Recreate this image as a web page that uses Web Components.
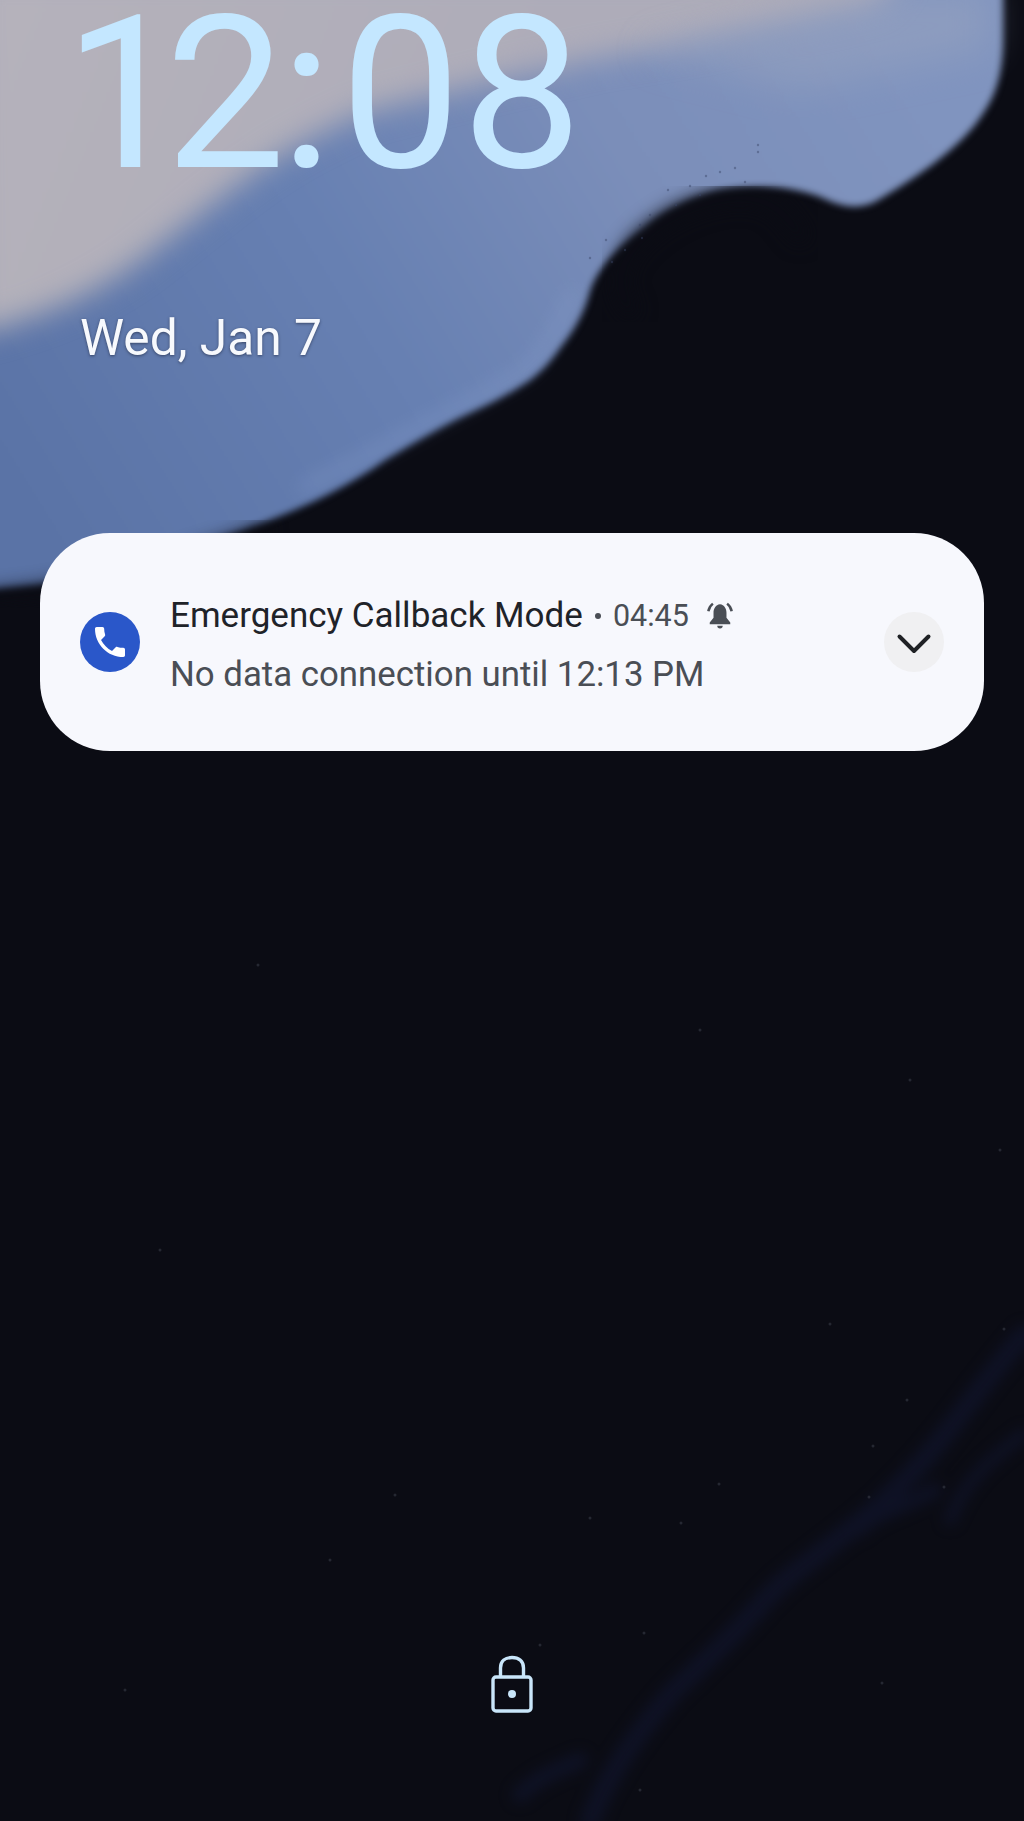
<!DOCTYPE html>
<html lang="en">
<head>
<meta charset="utf-8">
<title>Lock screen</title>
<style>
  html, body { margin: 0; background: #0b0c14; }
</style>
</head>
<body>
<lock-screen>
  <lock-clock time="12:08" date="Wed, Jan 7"></lock-clock>
  <notification-card>
    <span slot="title">Emergency Callback Mode</span>
    <span slot="time">04:45</span>
    <span slot="text">No data connection until 12:13 PM</span>
  </notification-card>
  <lock-indicator></lock-indicator>
</lock-screen>

<script>
// Wallpaper is drawn once inside the screen and everything else flows over it
class LockScreen extends HTMLElement {
  constructor() {
    super();
    this.attachShadow({ mode: "open" });

    // Faint specks on the dark part of the wallpaper
    const specks = [
      [830, 1324], [1004, 1329], [873, 1446], [719, 1484], [681, 1523], [869, 1497],
      [944, 1487], [907, 1400], [644, 1633], [882, 1683], [258, 965], [160, 1250],
      [910, 1080], [540, 1645], [590, 1518], [1000, 1150], [700, 1030],
      [125, 1690], [395, 1495], [330, 1560], [640, 1790]
    ].map(([x, y]) => `<circle cx="${x}" cy="${y}" r="1.5" fill="#3c3f4a" opacity=".55"/>`).join("");

    // Grain along the blurred edge of the blue shape
    const grain = [
      [606, 240], [642, 238], [668, 190], [690, 186], [706, 176], [720, 172], [735, 168],
      [758, 145], [612, 262], [650, 215], [676, 205], [700, 195], [590, 258], [745, 182],
      [758, 152], [640, 225], [625, 250]
    ].map(([x, y]) => `<circle cx="${x}" cy="${y}" r="1.2" fill="#3a4468" opacity=".45"/>`).join("");

    this.shadowRoot.innerHTML = `
      <style>
        :host {
          display: block;
          width: 1024px;
          height: 1821px;
          position: relative;
          overflow: hidden;
          background: #0b0c14;
          font-family: Roboto, "Liberation Sans", sans-serif;
        }
        .wallpaper {
          position: absolute;
          inset: 0;
          width: 100%;
          height: 100%;
        }
        .content {
          position: relative;
          height: 100%;
          box-sizing: border-box;
          display: flex;
          flex-direction: column;
        }
      </style>
      <svg class="wallpaper" viewBox="0 0 1024 1821" aria-hidden="true" color-interpolation-filters="sRGB">
        <defs>
          <linearGradient id="blue" gradientUnits="userSpaceOnUse" x1="60" y1="560" x2="900" y2="40">
            <stop offset="0" stop-color="#5a73a6"/>
            <stop offset=".4" stop-color="#6780b2"/>
            <stop offset=".7" stop-color="#7b8eb9"/>
            <stop offset="1" stop-color="#8094bf"/>
          </linearGradient>
          <linearGradient id="gray" gradientUnits="userSpaceOnUse" x1="0" y1="0" x2="500" y2="200">
            <stop offset="0" stop-color="#b5b2bb"/>
            <stop offset="1" stop-color="#aeacb9"/>
          </linearGradient>
          <filter id="b4" x="-10%" y="-10%" width="120%" height="120%"><feGaussianBlur stdDeviation="3.500"/></filter>
          <filter id="b8" x="-10%" y="-10%" width="120%" height="120%"><feGaussianBlur stdDeviation="9"/></filter>
          <filter id="b12" x="-10%" y="-10%" width="120%" height="120%"><feGaussianBlur stdDeviation="15"/></filter>
          <filter id="b18" x="-30%" y="-30%" width="160%" height="160%"><feGaussianBlur stdDeviation="18"/></filter>
          <filter id="b7" x="-10%" y="-10%" width="120%" height="120%"><feGaussianBlur stdDeviation="7"/></filter>
        </defs>
        <rect width="1024" height="1821" fill="#0b0c14"/>

        <!-- blue shape -->
        <path filter="url(#b4)" fill="url(#blue)" d="M-30 -30 L1003 -30 L1003 40 C1003 85 990 105 975 125
          C950 155 915 178 880 199 C862 210 845 208 825 199 C800 188 760 183 718 191 C690 198 665 210 645 228
          C615 250 598 268 590 291 C582 320 570 335 560 348 C548 365 540 372 530 380 C500 400 480 408 455 420
          C425 436 405 448 385 460 C350 485 310 505 270 520 C210 545 120 570 40 585 L-30 592 Z"/>

        <!-- lighter rim along the lower edge -->
        <path filter="url(#b8)" fill="none" stroke="#8ea4d2" stroke-width="12" opacity=".3"
          d="M300 490 C340 470 370 455 400 438 C440 416 480 398 525 370 C548 348 562 320 575 290"/>

        <!-- gray top left -->
        <path filter="url(#b12)" fill="url(#gray)" d="M-30 -30 L905 -30 L880 4 C820 20 770 28 718 38 C670 48 630 52 588 60
          C550 70 520 74 496 80 C450 92 410 100 366 112 C330 128 295 145 261 168 C215 200 175 235 130 268 C85 298 40 318 -30 335 Z"/>

        <!-- top right haze -->
        <path filter="url(#b18)" fill="#99a4bf" opacity=".5" d="M640 50 L900 -10 L990 -10 L990 50 L800 90 Z"/>

        <!-- fuzzy dark edge: background colour stroke laid along the blue edge, both ends run off into the dark -->
        <path filter="url(#b8)" fill="none" stroke="#0b0c14" stroke-width="18" stroke-linecap="round"
          d="M630 310 C612 285 620 258 645 236 C665 218 690 206 718 200 C745 194 765 198 782 212 L800 235"/>
        <path filter="url(#b8)" fill="none" stroke="#0b0c14" stroke-width="16" opacity=".7"
          d="M270 528 C210 552 120 578 40 592 L-30 600"/>
        ${grain}

        <!-- faint streaks -->
        <g fill="none" stroke="#10142b" stroke-linecap="round" filter="url(#b7)" opacity=".75">
          <path stroke-width="20" d="M1024 1335 C980 1385 945 1440 905 1480 C860 1530 790 1570 765 1600 C730 1640 700 1665 670 1695 C640 1730 610 1770 590 1821"/>
          <path stroke-width="12" d="M1024 1434 C990 1460 965 1480 950 1520"/>
          <path stroke-width="14" d="M935 1490 C900 1510 880 1510 860 1530"/>
          <path stroke-width="16" d="M580 1760 C560 1770 540 1775 520 1795"/>
        </g>
        ${specks}
      </svg>
      <div class="content"><slot></slot></div>
    `;
  }
}

// Big clock and the date under it
class LockClock extends HTMLElement {
  constructor() {
    super();
    this.attachShadow({ mode: "open" });
    this.shadowRoot.innerHTML = `
      <style>
        :host {
          display: block;
          padding-left: 64px;
          height: 533px;
          box-sizing: border-box;
        }
        .time {
          font-size: 214px;
          font-weight: 400;
          line-height: 188px;
          letter-spacing: 1px;
          color: #c4e7ff;
          white-space: nowrap;
        }
        /* the reference font sets the 1 tight and the colon wide */
        .one { letter-spacing: -19px; }
        .two { letter-spacing: -5px; }
        .colon { letter-spacing: 8px; }
        .date {
          margin-top: 122px;
          margin-left: 16px;
          font-size: 49.7px;
          line-height: 56px;
          color: #f7f9fd;
          text-shadow: 0 1px 3px rgba(20, 25, 45, .55);
        }
      </style>
      <div class="time"><span class="one">1</span><span class="two">2</span><span class="colon">:</span>08</div>
      <div class="date"></div>
    `;
    this.shadowRoot.querySelector(".date").textContent = this.getAttribute("date");
  }
}

// Notification pill with app icon, two lines of text and the expand button
class NotificationCard extends HTMLElement {
  constructor() {
    super();
    this.attachShadow({ mode: "open" });
    this.shadowRoot.innerHTML = `
      <style>
        :host {
          display: flex;
          align-items: center;
          margin: 0 40px;
          height: 218px;
          padding: 0 40px;
          border-radius: 70px;
          background: #f7f8fd;
          font-size: 35px;
        }
        .app {
          flex: none;
          width: 60px;
          height: 60px;
          border-radius: 50%;
          background: #2a57c9;
          display: flex;
          align-items: center;
          justify-content: center;
          margin-right: 30px;
        }
        .body { flex: 1; min-width: 0; padding-top: 6px; }
        .head {
          display: flex;
          align-items: center;
          height: 59px;
          color: #1f2329;
        }
        .dot {
          width: 6px;
          height: 6px;
          border-radius: 50%;
          background: #4a4e55;
          margin: 0 12px 0 12px;
        }
        .time { color: #4a4e55; font-size: 30.500px; }
        .bell { margin-left: 18px; width: 26px; height: 27px; }
        .text { height: 59px; line-height: 59px; color: #4a4e55; font-size: 34.800px; }
        .expand {
          flex: none;
          width: 60px;
          height: 60px;
          border-radius: 50%;
          background: #f0f0f2;
          display: flex;
          align-items: center;
          justify-content: center;
        }
        .expand svg { margin-top: 4px; }
      </style>
      <div class="app">
        <svg width="40" height="40" viewBox="0 0 24 24" fill="#fff">
          <path d="M6.62 10.79c1.44 2.83 3.76 5.14 6.59 6.59l2.2-2.2c.27-.27.67-.36 1.02-.24 1.12.37 2.33.57 3.57.57.55 0 1 .45 1 1V20c0 .55-.45 1-1 1-9.39 0-17-7.61-17-17 0-.55.45-1 1-1h3.5c.55 0 1 .45 1 1 0 1.25.2 2.45.57 3.57.11.35.03.74-.25 1.02l-2.2 2.2z"/>
        </svg>
      </div>
      <div class="body">
        <div class="head">
          <slot name="title"></slot>
          <span class="dot"></span>
          <span class="time"><slot name="time"></slot></span>
          <svg class="bell" viewBox="0 0 24 25" fill="#4a4e55">
            <path d="M12 2C8 2.500 6 6 6 10V14.500L2.500 19V20.500H21.500V19L18 14.500V10C18 6 16 2.500 12 2Z"/>
            <path d="M9.500 22a2.500 2.500 0 0 0 5 0Z"/>
            <path fill="none" stroke="#4a4e55" stroke-width="2.300" d="M1.200 8.500C1.800 5.500 3.200 3.200 5.400 1.500M22.800 8.500C22.200 5.500 20.800 3.200 18.600 1.500"/>
          </svg>
        </div>
        <div class="text"><slot name="text"></slot></div>
      </div>
      <div class="expand">
        <svg width="36" height="22" viewBox="0 0 36 22" fill="none" stroke="#1f2125" stroke-width="4" stroke-linecap="round" stroke-linejoin="round">
          <path d="M3.500 3.500 L18 18 L32.500 3.500"/>
        </svg>
      </div>
    `;
  }
}

// Padlock at the bottom of the screen
class LockIndicator extends HTMLElement {
  constructor() {
    super();
    this.attachShadow({ mode: "open" });
    this.shadowRoot.innerHTML = `
      <style>
        :host {
          display: flex;
          justify-content: center;
          margin-top: auto;
          padding-bottom: 107px;
        }
        svg { display: block; }
      </style>
      <svg width="44" height="60" viewBox="0 0 44 60" fill="none" stroke="#c9e6fa" stroke-width="3.4" stroke-linejoin="round">
        <path d="M10.500 24 V14 C10.500 7 15.500 3.500 22 3.500 C28.500 3.500 33.500 7 33.500 14 V24"/>
        <rect x="3" y="23" width="38" height="34" rx="3"/>
        <circle cx="22" cy="40" r="4" fill="#c9e6fa" stroke="none"/>
      </svg>
    `;
  }
}

customElements.define("lock-screen", LockScreen);
customElements.define("lock-clock", LockClock);
customElements.define("notification-card", NotificationCard);
customElements.define("lock-indicator", LockIndicator);
</script>
</body>
</html>
